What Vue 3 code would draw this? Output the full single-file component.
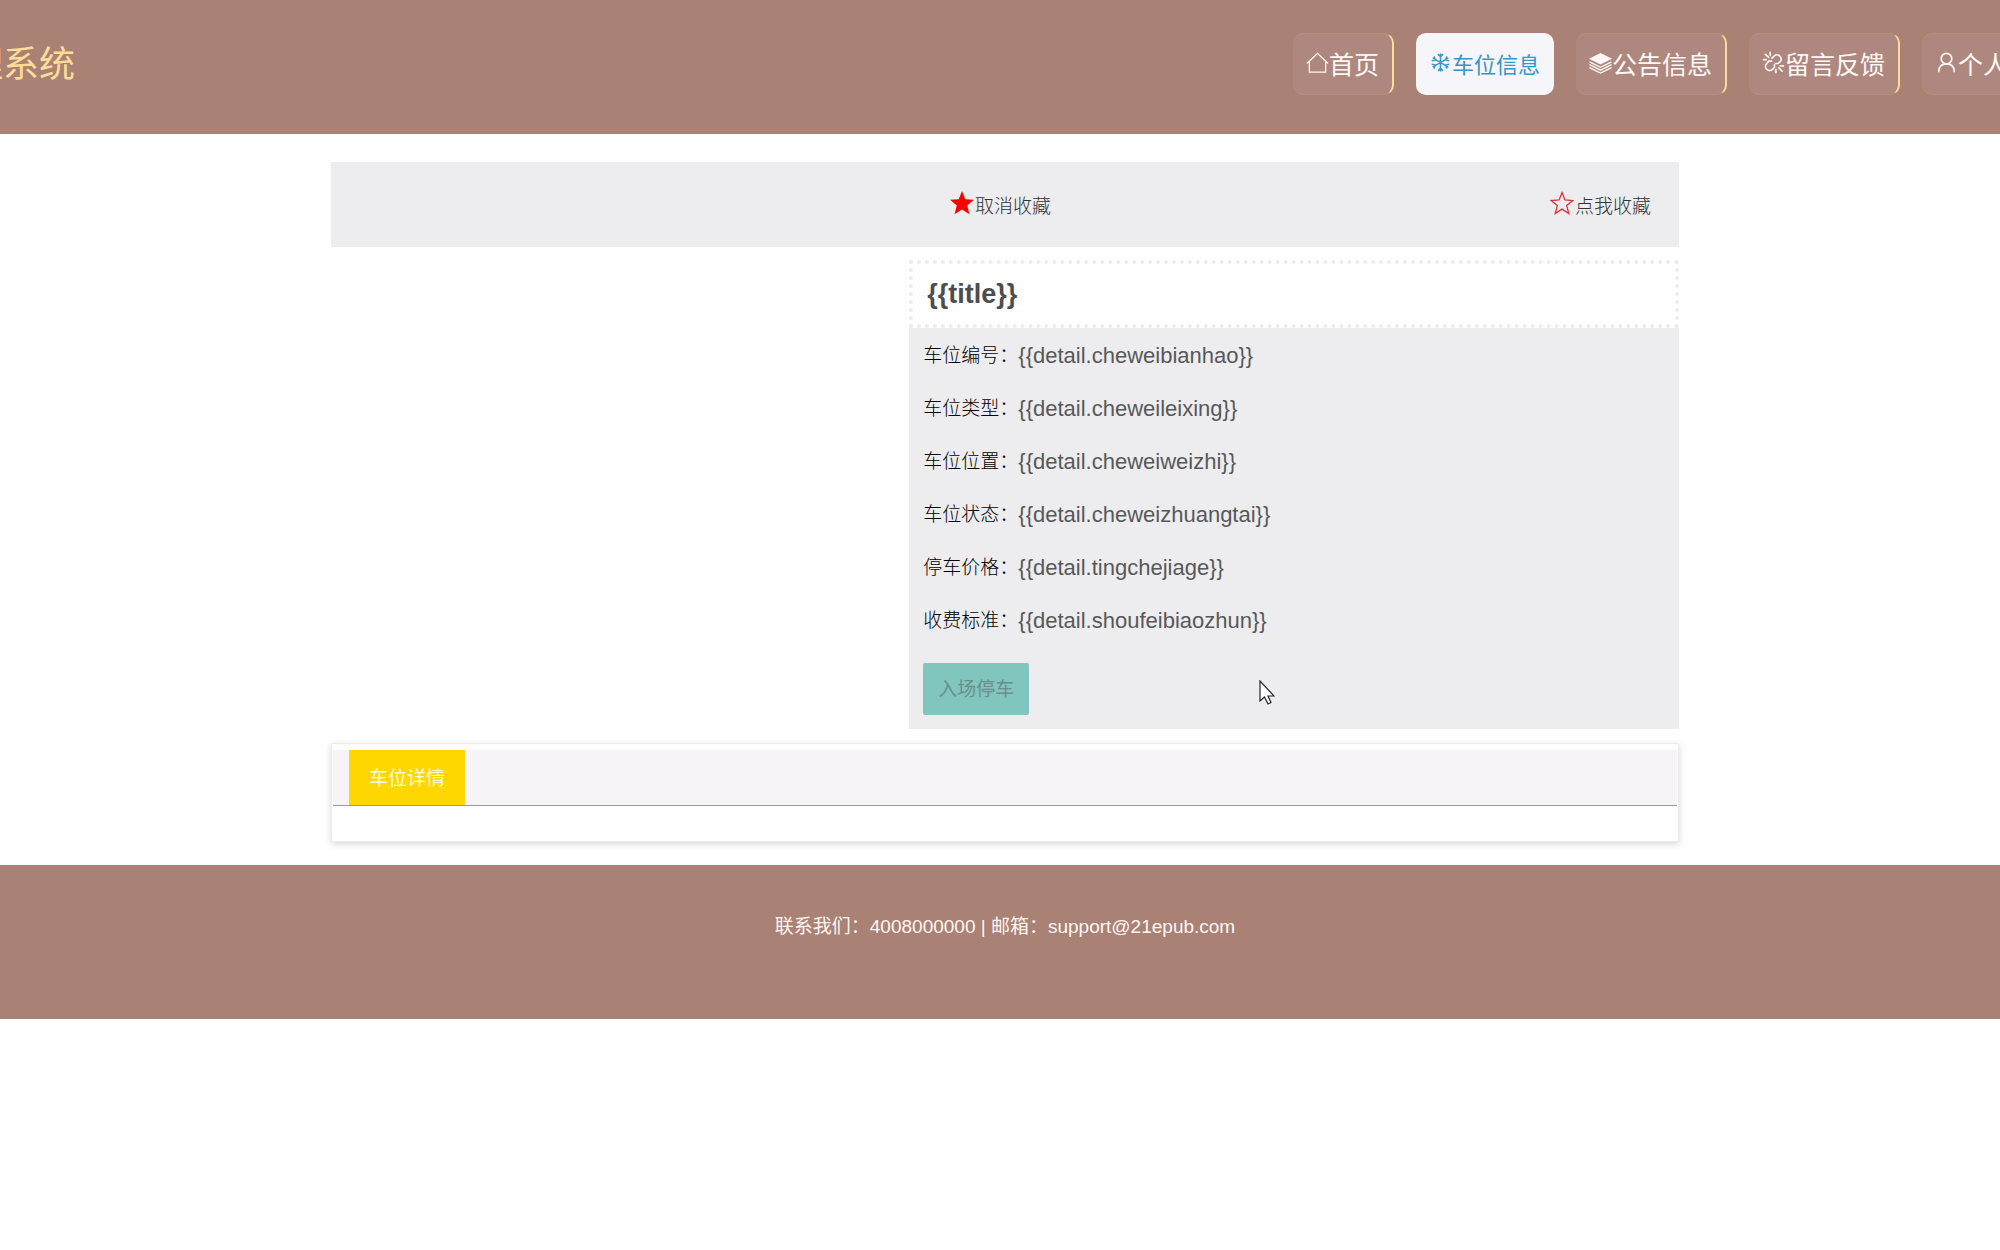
<script setup>
import { ref } from 'vue'

const siteName = '理系统'
const active = ref('车位信息')
const nav = [
  { label: '首页', icon: 'home' },
  { label: '车位信息', icon: 'snow' },
  { label: '公告信息', icon: 'layers' },
  { label: '留言反馈', icon: 'unlink' },
  { label: '个人中心', icon: 'user' }
]
const title = '{{title}}'
const rows = [
  ['车位编号：', '{{detail.cheweibianhao}}'],
  ['车位类型：', '{{detail.cheweileixing}}'],
  ['车位位置：', '{{detail.cheweiweizhi}}'],
  ['车位状态：', '{{detail.cheweizhuangtai}}'],
  ['停车价格：', '{{detail.tingchejiage}}'],
  ['收费标准：', '{{detail.shoufeibiaozhun}}']
]
</script>

<template>
  <div class="page">
    <header class="header">
      <div class="header-inner">
        <div class="logo">{{ siteName }}</div>
        <nav class="nav">
          <a
            v-for="item in nav"
            :key="item.label"
            href="#"
            class="nav-item"
            :class="{ active: item.label === active }"
            @click.prevent="active = item.label"
          >
            <svg v-if="item.icon === 'home'" class="icon" viewBox="0 0 24 24" fill="none" stroke="currentColor" stroke-width="1.3">
              <path d="M1 13 12 2.500 23 13M3.500 11v11h17V11" />
            </svg>
            <svg v-else-if="item.icon === 'snow'" class="icon" viewBox="0 0 24 24" fill="none" stroke="currentColor" stroke-width="1.600">
              <path d="M12 2.500v19M3.800 7.200l16.400 9.600M20.200 7.200 3.800 16.800M9.300 3.300 12 6l2.700-2.700M9.300 20.700 12 18l2.700 2.700M2.800 10.300l3.700-1-1-3.700M21.200 13.700l-3.700 1 1 3.700M21.200 10.300l-3.700-1 1-3.700M2.800 13.700l3.700 1-1 3.700" />
            </svg>
            <svg v-else-if="item.icon === 'layers'" class="icon" viewBox="0 0 24 24">
              <path fill="currentColor" d="M12 2 24 8 12 14 0 8z" />
              <path fill="none" stroke="currentColor" stroke-width="1.500" d="M.5 11.300 12 17l11.500-5.700M.5 14.300 12 20l11.500-5.700M.5 17.300 12 23l11.500-5.700" />
            </svg>
            <svg v-else-if="item.icon === 'unlink'" class="icon" viewBox="0 0 24 24" fill="none" stroke="currentColor" stroke-width="1.700" stroke-linecap="round">
              <path d="M10.500 7.500l2.200-2.300a4.300 4.300 0 0 1 6.300 5.800L17 13h-3M10 10.500H7l-2 2.500a4.300 4.300 0 0 0 6 6.200l2-2.200v-2.500M3.500 3.500l3.500 3.200M8.500 1.500v3M1.500 9h3M17.500 17.500l3.500 3.500M14.500 19.500v3M19 15.500h3.500" />
            </svg>
            <svg v-else class="icon" viewBox="0 0 24 24" fill="none" stroke="currentColor" stroke-width="1.800" stroke-linecap="round">
              <circle cx="12" cy="8" r="5.500" />
              <path d="M4 21.500c0-5 3-8 8-8s8 3 8 8" />
            </svg>
            <span>{{ item.label }}</span>
          </a>
        </nav>
      </div>
    </header>

    <main class="main">
      <section class="favorites">
        <button type="button" class="fav">
          <svg class="star" viewBox="0 0 24 24"><path fill="#f00" d="m12 0 3.300 8.300 8.700.5-6.800 5.600 2.300 8.900L12 18.400l-7.500 4.900 2.300-8.900L0 8.800l8.700-.5z" /></svg>
          <span>取消收藏</span>
        </button>
        <button type="button" class="fav">
          <svg class="star" viewBox="0 0 24 24"><path fill="none" stroke="#e0303c" stroke-width="1.300" d="m12 1.500 2.900 7.500 8 .5-6.200 5.100 2.100 7.900-6.800-4.400-6.800 4.400 2.100-7.900L1.100 9.500l8-.5z" /></svg>
          <span>点我收藏</span>
        </button>
      </section>

      <section class="detail">
        <h1 class="title">{{ title }}</h1>
        <div class="info">
          <dl class="rows">
            <div v-for="[label, value] in rows" :key="label" class="row">
              <dt>{{ label }}</dt>
              <dd>{{ value }}</dd>
            </div>
          </dl>
          <button type="button" class="park">入场停车</button>
          <svg class="cursor" viewBox="0 0 16 25">
            <path fill="#fff" stroke="#222" stroke-width="1.200" d="M1 1v20l4.500-4 3.500 7 3-1.500-3-6.500h6z" />
          </svg>
        </div>
      </section>

      <section class="card">
        <div class="tabs" role="tablist">
          <button type="button" class="tab" role="tab" aria-selected="true">车位详情</button>
        </div>
      </section>
    </main>

    <footer class="footer">联系我们：4008000000 | 邮箱：support@21epub.com</footer>
  </div>
</template>

<style>
body {
  background: #fefefe;
}
</style>

<style scoped>
.page {
  font-family: "Liberation Sans", "Noto Sans CJK SC", sans-serif;
  font-size: 19px;
  color: #333;
}
button {
  font: inherit;
  border: 0;
  cursor: pointer;
}
.header {
  height: 134px;
  overflow: hidden;
  background: #a98175;
}
.header-inner {
  display: flex;
  justify-content: space-between;
  margin: 0 -73px 0 -33px;
  padding-top: 33px;
}
.logo {
  font-size: 36px;
  line-height: 64px;
  color: #fcdc98;
  white-space: nowrap;
}
.nav {
  display: flex;
  gap: 22px;
}
.nav-item {
  box-sizing: border-box;
  display: flex;
  align-items: center;
  height: 62px;
  padding: 0 13px 3px;
  border: solid #b6917e;
  border-width: 1px 2px 1px 0;
  border-right-color: #fcdc98;
  border-radius: 10px;
  background: #ae887e;
  color: #fff8f6;
  font-size: 25px;
  white-space: nowrap;
  text-decoration: none;
}
.nav-item .icon {
  width: 23px;
  height: 23px;
}
.nav-item.active {
  border-color: #f6f5f9;
  border-left-width: 0;
  border-right-width: 1px;
  background: #f6f5f9;
  color: #3397c8;
  font-size: 22px;
}
.main {
  width: 67.4%;
  margin: 0 auto;
  padding: 28px 0 23px 10px;
}
.favorites {
  display: flex;
  justify-content: flex-end;
  align-items: center;
  gap: 37.8%;
  height: 85px;
  padding-right: 28px;
  background: #ededef;
}
.fav {
  display: flex;
  align-items: center;
  gap: 1px;
  padding: 0;
  background: none;
  color: #333;
  font-weight: 300;
}
.star {
  width: 24px;
  height: 24px;
  margin-bottom: 3px;
}
.detail {
  width: 57.1%;
  margin: 13px 0 14px auto;
}
.title {
  margin: 0;
  padding: 0 14px;
  border: 4px dotted #ededef;
  font-size: 27px;
  line-height: 60px;
  color: #4d4d4f;
}
.info {
  position: relative;
  padding: 0 14px 14px;
  background: #ededef;
}
.rows {
  margin: 0;
  padding: 1px 0 16px;
}
.row {
  display: flex;
  line-height: 53px;
}
dt {
  color: #000;
  font-weight: 300;
}
dd {
  margin: 0;
  font-size: 22px;
  color: #58585a;
}
.park {
  display: block;
  height: 52px;
  padding: 0 15px 3px;
  border-radius: 2px;
  background: #80c5be;
  color: #6b8f8c;
}
.cursor {
  position: absolute;
  left: 350px;
  bottom: 24px;
  width: 16px;
  height: 25px;
}
.card {
  padding: 6px 1px 35px;
  border: 1px solid #ececee;
  border-radius: 2px;
  background: #fff;
  box-shadow: 0 2px 6px rgba(0, 0, 0, 0.15);
}
.tabs {
  padding-left: 16px;
  border-bottom: 1px solid #9b999d;
  background: #f6f4f7;
}
.tab {
  height: 55px;
  padding: 0 20px 3px;
  background: #ffd700;
  color: #fffbe0;
}
.footer {
  box-sizing: border-box;
  height: 154px;
  padding: 48px 0 0 10px;
  background: #a98175;
  color: #fff6f2;
  line-height: 28px;
  text-align: center;
}
</style>
